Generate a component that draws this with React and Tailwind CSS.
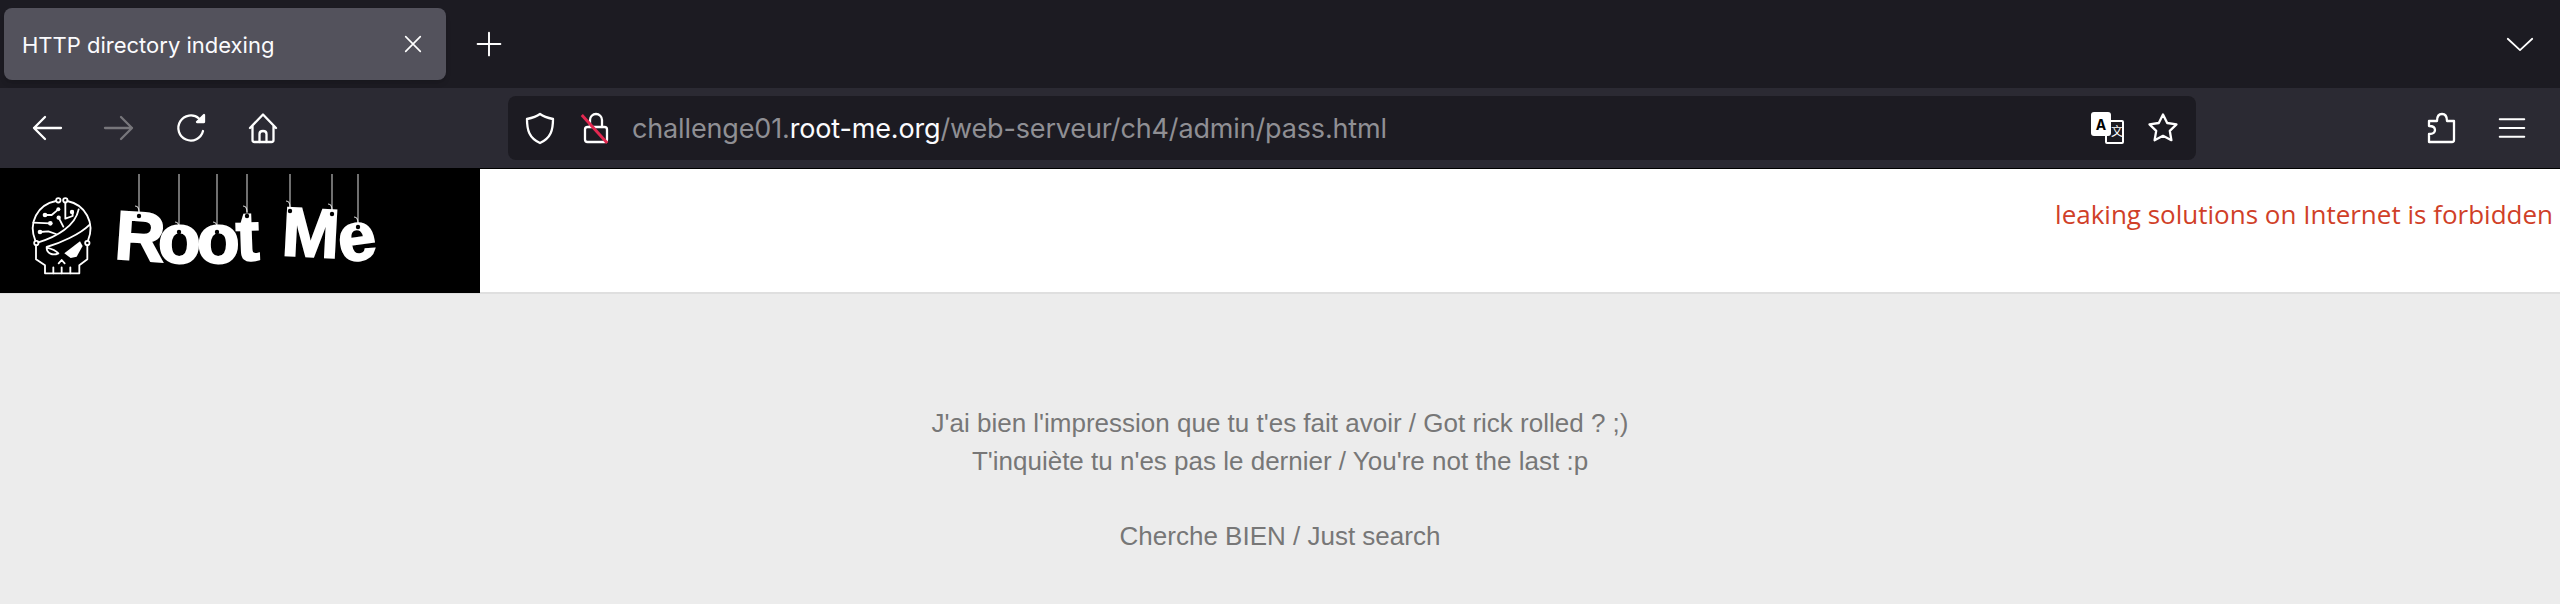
import React from "react";

const Skull = () => (
  <g transform="translate(0,-3) scale(0.3333)" fill="none" stroke="#fff" strokeWidth="5.5" strokeLinecap="round" strokeLinejoin="round">
    {/* dome */}
    <path d="M106 224 C84 170 112 116 168 105" />
    <path d="M202 105 C256 116 286 170 264 224" />
    <circle cx="175" cy="103" r="6.5" />
    <circle cx="196" cy="103" r="6.5" />
    <circle cx="109" cy="231" r="6.5" />
    <circle cx="262" cy="231" r="6.5" />
    {/* split line */}
    <path d="M115 229 C170 212 226 180 236 130" />
    <path d="M140 243 C180 232 240 205 270 175" />
    {/* traces */}
    <path d="M135 147 L155 147 L175 130" />
    <path d="M100 170 L150 172" />
    <path d="M120 198 L145 196 L168 204" />
    <path d="M176 155 L190 182" />
    <path d="M196 110 L196 158 L218 150 L218 135" />
    <g fill="#fff" stroke="none">
      <circle cx="135" cy="147" r="7" />
      <circle cx="175" cy="130" r="6" />
      <circle cx="151" cy="172" r="7" />
      <circle cx="120" cy="198" r="7" />
      <circle cx="176" cy="155" r="6.5" />
      <circle cx="216" cy="138" r="6.5" />
    </g>
    {/* jaw */}
    <path d="M108 238 L108 280 L135 298 L135 322 L238 322 L238 298 L262 280 L262 238" />
    <path d="M160 304 L160 322 M185 304 L185 322 M211 304 L211 322" />
    <path d="M176 292 L185 282 L194 292" />
    <path d="M140 245 C140 262 158 270 175 262 C166 252 152 248 140 245 Z" />
    <path d="M193 262 L240 226 L248 240 L230 272 L212 276 Z" fill="#fff" stroke="none" />
  </g>
);

const letters = [
  { ch: "R", x: 115, y: 91, rot: 4, size: 69 },
  { ch: "o", x: 158, y: 94, rot: 0, size: 70 },
  { ch: "o", x: 197, y: 94, rot: 0, size: 70 },
  { ch: "t", x: 236, y: 91, rot: -2, size: 70 },
  { ch: "M", x: 282, y: 87, rot: 3, size: 69 },
  { ch: "e", x: 338, y: 91, rot: -8, size: 68 },
];

const strings = [
  [139, 44],
  [179, 60],
  [217, 60],
  [247, 44],
  [290, 39],
  [332, 42],
  [358, 55],
];

const Logo = () => (
  <svg width="480" height="125" viewBox="0 0 480 125" className="block">
    <Skull />
    {strings.map(([x, end]) => (
      <g key={x}>
        <line x1={x} y1="5" x2={x} y2={end} stroke="#bbb" strokeWidth="1.2" />
        <path d={`M${x} ${end - 1} C${x} ${end - 5} ${x - 1} ${end - 7} ${x - 4} ${end - 7}`} fill="none" stroke="#ddd" strokeWidth="1.2" />
      </g>
    ))}
    {letters.map((l, i) => (
      <text
        key={i}
        x={l.x}
        y={l.y}
        fontSize={l.size}
        fontWeight="700"
        fontFamily="'Liberation Sans', sans-serif"
        fill="#fff"
        stroke="#fff"
        strokeWidth="2"
        transform={`rotate(${l.rot} ${l.x + 20} ${l.y - 20})`}
      >
        {l.ch}
      </text>
    ))}
    {strings.map(([x, end]) => (
      <circle key={x} cx={x} cy={end + 3} r="2.2" fill="#000" />
    ))}
  </svg>
);

const Icon = ({ w = 32, h = 32, children, className = "" }) => (
  <svg width={w} height={h} viewBox="0 0 32 32" fill="none" stroke="currentColor" strokeWidth="2.3" strokeLinecap="round" strokeLinejoin="round" className={className}>
    {children}
  </svg>
);

const NavButton = ({ children, className = "text-white" }) => (
  <div className={`flex w-[72px] items-center justify-center ${className}`}>{children}</div>
);

export default function App() {
  return (
    <div className="flex h-[604px] flex-col overflow-hidden bg-[#ececec]">
      {/* tab strip */}
      <div className="flex h-[88px] items-center bg-[#1c1b22] pl-[4px] pr-[26px] text-white">
        <div className="flex h-[72px] w-[442px] items-center justify-between rounded-[8px] bg-[#53525c] pl-[18px] pr-[20px] shadow-md">
          <span className="pt-[3px] font-['Inter',sans-serif] text-[22px] text-[#fbfbfe]">HTTP directory indexing</span>
          <Icon w={26} h={26}>
            <path d="M7 7 L25 25 M25 7 L7 25" strokeWidth="2" />
          </Icon>
        </div>
        <div className="ml-[29px]">
          <Icon w={28} h={28}>
            <path d="M16 3 L16 29 M3 16 L29 16" strokeWidth="2.2" />
          </Icon>
        </div>
        <div className="ml-auto">
          <Icon w={28} h={28}>
            <path d="M2 10 L16 23 L30 10" strokeWidth="2" />
          </Icon>
        </div>
      </div>

      {/* toolbar */}
      <div className="flex h-[81px] items-center border-b border-black bg-[#2b2a33] pl-[11px] pr-[12px]">
        <NavButton>
          <Icon>
            <path d="M30 16 L3 16 M14 5 L3 16 L14 27" />
          </Icon>
        </NavButton>
        <NavButton className="text-[#77767b]">
          <Icon>
            <path d="M2 16 L29 16 M18 5 L29 16 L18 27" />
          </Icon>
        </NavButton>
        <NavButton>
          <Icon>
            <path d="M28 19 A12.5 12.5 0 1 1 24 6.5" />
            <path d="M22 10 L29 3 L29 10 Z" fill="currentColor" />
          </Icon>
        </NavButton>
        <NavButton>
          <Icon>
            <path d="M3 16 L16 2.5 L29 16 M5.5 14 L5.5 28 Q5.5 30 7.5 30 L24.5 30 Q26.5 30 26.5 28 L26.5 14" />
            <path d="M12.5 30 L12.5 22 Q12.5 19 16 19 Q19.5 19 19.5 22 L19.5 30" />
          </Icon>
        </NavButton>

        {/* url bar */}
        <div className="ml-[209px] flex h-[64px] w-[1688px] items-center rounded-[8px] bg-[#1c1b22] pl-[16px] pr-[16px] text-white">
          <Icon w={32} h={34}>
            <path d="M16 2 C20 5 24 6 29 7 C29 18 27 26 16 31 C5 26 3 18 3 7 C8 6 12 5 16 2 Z" />
          </Icon>
          <div className="relative ml-[23px]">
            <Icon w={32} h={34}>
              <rect x="6" y="15" width="22" height="15" rx="2.5" />
              <path d="M11 15 L11 8 A6 6 0 0 1 23 8 L23 15" />
            </Icon>
            <div className="absolute left-[14px] top-[-1px] h-[38px] w-[3px] rotate-[-42deg] bg-[#e22850]" />
          </div>
          <div className="ml-[21px] pt-[3px] font-['Inter',sans-serif] text-[27px] tracking-[-0.15px] text-[#8f8f94]">
            challenge01.<span className="text-[#fbfbfe]">root-me.org</span>/web-serveur/ch4/admin/pass.html
          </div>
          <div className="relative ml-auto h-[34px] w-[34px]">
            <div className="absolute left-[14px] top-[9px] h-[24px] w-[19px] rounded-[2px] border-2 border-white" />
            <div className="absolute left-0 top-[1px] flex h-[24px] w-[20px] items-center justify-center rounded-[3px] bg-white font-['Inter',sans-serif] text-[14px] font-bold text-black">
              A
            </div>
            <div className="absolute left-[20px] top-[13px] font-['Noto_Sans_CJK_SC',sans-serif] text-[12px] leading-[14px] text-white">文</div>
          </div>
          <div className="ml-[22px] mr-[1px] text-white">
            <Icon w={32} h={32}>
              <path d="M16 2.5 L20.2 11 L29.5 12.4 L22.8 18.9 L24.4 28.2 L16 23.8 L7.6 28.2 L9.2 18.9 L2.5 12.4 L11.8 11 Z" />
            </Icon>
          </div>
        </div>

        <div className="ml-auto flex items-center text-white">
          <Icon w={32} h={32} className="mr-[41px]">
            <path d="M4 30 L4 22 Q10 22 10 18 Q10 14 4 14 L4 9 L12 9 Q12 2 17 2 Q22 2 22 9 L29 9 L29 28 Q29 30 27 30 Z" />
          </Icon>
          <Icon w={28} h={28} className="mr-[22px]">
            <path d="M2 6 L30 6 M2 16 L30 16 M2 26 L30 26" />
          </Icon>
        </div>
      </div>

      {/* page header */}
      <div className="flex h-[125px] items-start justify-between border-b-2 border-[#dfdfdf] bg-white">
        <div className="h-[124px] w-[480px] bg-black">
          <Logo />
        </div>
        <div className="mr-[7px] mt-[27px] font-['Open_Sans',sans-serif] text-[26px] leading-[36px] text-[#d03f28]">
          leaking solutions on Internet is forbidden
        </div>
      </div>

      {/* content */}
      <div className="pt-[111px] text-center font-['Liberation_Sans',sans-serif] text-[26px] leading-[37.5px] text-[#777777]">
        <p>J'ai bien l'impression que tu t'es fait avoir / Got rick rolled ? ;)</p>
        <p>T'inquiète tu n'es pas le dernier / You're not the last :p</p>
        <p className="mt-[37.5px]">Cherche BIEN / Just search</p>
      </div>
    </div>
  );
}
